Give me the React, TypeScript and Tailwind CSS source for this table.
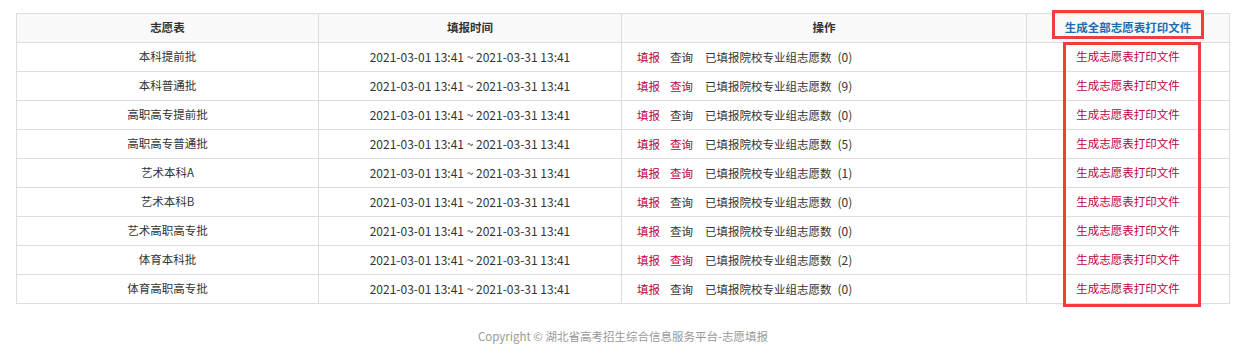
import * as React from "react";

const rows = [
  { name: "本科提前批", count: 0 },
  { name: "本科普通批", count: 9 },
  { name: "高职高专提前批", count: 0 },
  { name: "高职高专普通批", count: 5 },
  { name: "艺术本科A", count: 1 },
  { name: "艺术本科B", count: 0 },
  { name: "艺术高职高专批", count: 0 },
  { name: "体育本科批", count: 2 },
  { name: "体育高职高专批", count: 0 },
];

const period = "2021-03-01 13:41 ~ 2021-03-31 13:41";

export default function App() {
  return (
    <div
      className="relative w-[1240px] h-[357px] bg-white text-[11.5px] text-[#333]"
      style={{ fontFamily: '"Microsoft YaHei", "Noto Sans CJK SC", "Noto Sans", sans-serif' }}
    >
      <div className="pt-[13px] pl-[16px]">
        <table className="w-[1213px] border-collapse table-fixed">
          <colgroup>
            <col className="w-[302px]" />
            <col className="w-[303px]" />
            <col className="w-[405px]" />
            <col className="w-[203px]" />
          </colgroup>
          <thead>
            <tr className="bg-[#f9f9f9] h-[29px]">
              <th className="border border-[#ddd] font-bold">志愿表</th>
              <th className="border border-[#ddd] font-bold">填报时间</th>
              <th className="border border-[#ddd] font-bold">操作</th>
              <th className="border border-[#ddd] font-bold text-[#1a6db3]">生成全部志愿表打印文件</th>
            </tr>
          </thead>
          <tbody>
            {rows.map((r) => (
              <tr key={r.name} className="h-[29px]">
                <td className="border border-[#ddd] text-center">{r.name}</td>
                <td className="border border-[#ddd] text-center text-[12px]">{period}</td>
                <td className="border border-[#ddd] pl-[15px]">
                  <span className="text-[#bd003f]">填报</span>
                  <span className={`ml-[10px] ${r.count > 0 ? "text-[#bd003f]" : ""}`}>查询</span>
                  <span className="ml-[12px]">已填报院校专业组志愿数</span>
                  <span className="ml-[6px] text-[12px]">({r.count})</span>
                </td>
                <td className="border border-[#ddd] text-center text-[#bd003f]">生成志愿表打印文件</td>
              </tr>
            ))}
          </tbody>
        </table>
      </div>

      <div className="mt-[24px] pl-[6px] text-center text-[#999]">
        Copyright © 湖北省高考招生综合信息服务平台-志愿填报
      </div>

      {/* annotation boxes */}
      <div className="absolute left-[1052px] top-[10px] w-[152px] h-[29px] border-[3px] border-[#f33c3c]" />
      <div className="absolute left-[1063px] top-[42px] w-[138px] h-[265px] border-[3px] border-[#f33c3c]" />
    </div>
  );
}
